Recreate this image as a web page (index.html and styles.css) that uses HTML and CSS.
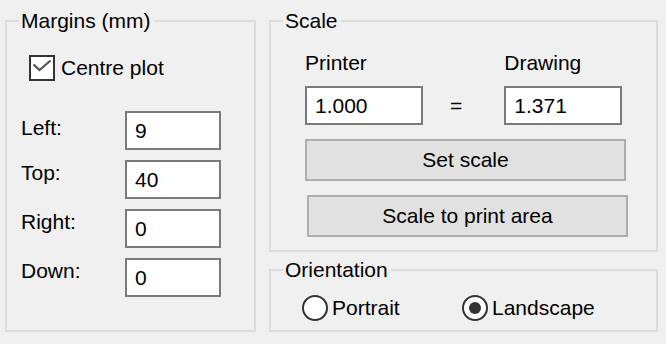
FILE: index.html
```html
<!DOCTYPE html>
<html>
	<head>
		<meta charset="UTF-8">
		<title>Print setup</title>
		<link rel="stylesheet" href="styles.css">
	</head>
	<body>
		<!-- two columns: margins on the left, scale + orientation on the right -->
		<div class="dialog">
			<fieldset class="group margins">
				<legend>Margins (mm)</legend>
				<label class="check">
					<span class="check-box">
						<svg width="22" height="22" viewBox="0 0 22 22">
							<polyline points="2.5,7.5 8.5,13 19.5,3.5" fill="none" stroke="#555" stroke-width="2.2"/>
						</svg>
					</span>
					Centre plot
				</label>
				<div class="field-list">
					<div class="field field-first">
						<span class="field-label">Left:</span>
						<input class="text-input" type="text" value="9">
					</div>
					<div class="field">
						<span class="field-label">Top:</span>
						<input class="text-input" type="text" value="40">
					</div>
					<div class="field">
						<span class="field-label">Right:</span>
						<input class="text-input" type="text" value="0">
					</div>
					<div class="field">
						<span class="field-label">Down:</span>
						<input class="text-input" type="text" value="0">
					</div>
				</div>
			</fieldset>

			<div class="side">
				<fieldset class="group scale">
					<legend>Scale</legend>
					<div class="scale-body">
						<div class="ratio">
							<div class="ratio-col">
								<span class="ratio-label">Printer</span>
								<input class="text-input wide" type="text" value="1.000">
							</div>
							<span class="equals">=</span>
							<div class="ratio-col">
								<span class="ratio-label">Drawing</span>
								<input class="text-input wide" type="text" value="1.371">
							</div>
						</div>
						<button class="push-btn">Set scale</button>
						<button class="push-btn push-btn-shift">Scale to print area</button>
					</div>
				</fieldset>

				<fieldset class="group orientation">
					<legend>Orientation</legend>
					<div class="radio-row">
						<label class="radio radio-first"><span class="radio-dot"></span>Portrait</label>
						<label class="radio"><span class="radio-dot on"></span>Landscape</label>
					</div>
				</fieldset>
			</div>
		</div>
	</body>
</html>
```

FILE: styles.css
```css
*{
	margin: 0;
	padding: 0;
	box-sizing: border-box;
}

html, body{
	background-color: #f0f0f0;
}

body{
	font-family: "Liberation Sans", Arial, sans-serif;
	font-size: 21px;
	line-height: 24px;
	color: #000;
}

/* whole dialog */
.dialog{
	display: flex;
	gap: 13px;
	padding: 9px 0 0 5px;
}

/* group boxes */
.group{
	border: 2px solid #dcdcdc;
	padding: 0;
}

.group legend{
	margin-left: 12px;
	padding: 0 3px 0 2px;
	line-height: 24px;
}

.margins{
	width: 251px;
	height: 323px;
}

.side{
	display: flex;
	flex-direction: column;
	gap: 6px;
	width: 389px;
}

.scale{
	height: 243px;
}

.scale-body{
	padding-left: 34px;
}

.orientation{
	height: 74px;
}

/* check box */
.check{
	display: flex;
	align-items: center;
	gap: 6px;
	margin: 22px 0 0 22px;
}

.check-box{
	width: 26px;
	height: 26px;
	border: 2px solid #333;
	background-color: #fff;
	display: flex;
}

/* margin fields */
.field-list{
	display: flex;
	flex-direction: column;
	gap: 10px;
	margin-top: 30px;
}

.field{
	display: flex;
	align-items: flex-start;
}

.field-label{
	width: 118px;
	padding-left: 14px;
	margin-top: 1px;
}

.field-first .field-label{
	margin-top: 5px;
}

.text-input{
	width: 96px;
	height: 39px;
	border: 2px solid #7a7a7a;
	background-color: #fff;
	padding: 0 8px;
	font-family: inherit;
	font-size: 21px;
	color: #000;
	outline: none;
}

.text-input.wide{
	width: 118px;
}

/* printer = drawing */
.ratio{
	display: flex;
	align-items: flex-end;
	margin-top: 18px;
}

.ratio-col{
	display: flex;
	flex-direction: column;
	gap: 11px;
}

.equals{
	margin: 0 42px 7px 27px;
}

/* buttons */
.push-btn{
	display: block;
	width: 321px;
	height: 42px;
	margin-top: 14px;
	border: 2px solid #adadad;
	background-color: #e1e1e1;
	font-family: inherit;
	font-size: 21px;
	color: #000;
}

.push-btn-shift{
	margin-left: 2px;
}

/* radio buttons */
.radio-row{
	display: flex;
	margin-top: 13px;
	padding-left: 31px;
}

.radio{
	display: flex;
	align-items: center;
	gap: 4px;
}

.radio-first{
	width: 160px;
}

.radio-dot{
	width: 26px;
	height: 26px;
	border: 2px solid #333;
	border-radius: 50%;
	background-color: #fff;
	display: flex;
	align-items: center;
	justify-content: center;
}

.radio-dot.on::after{
	content: "";
	width: 12px;
	height: 12px;
	border-radius: 50%;
	background-color: #333;
}
```
